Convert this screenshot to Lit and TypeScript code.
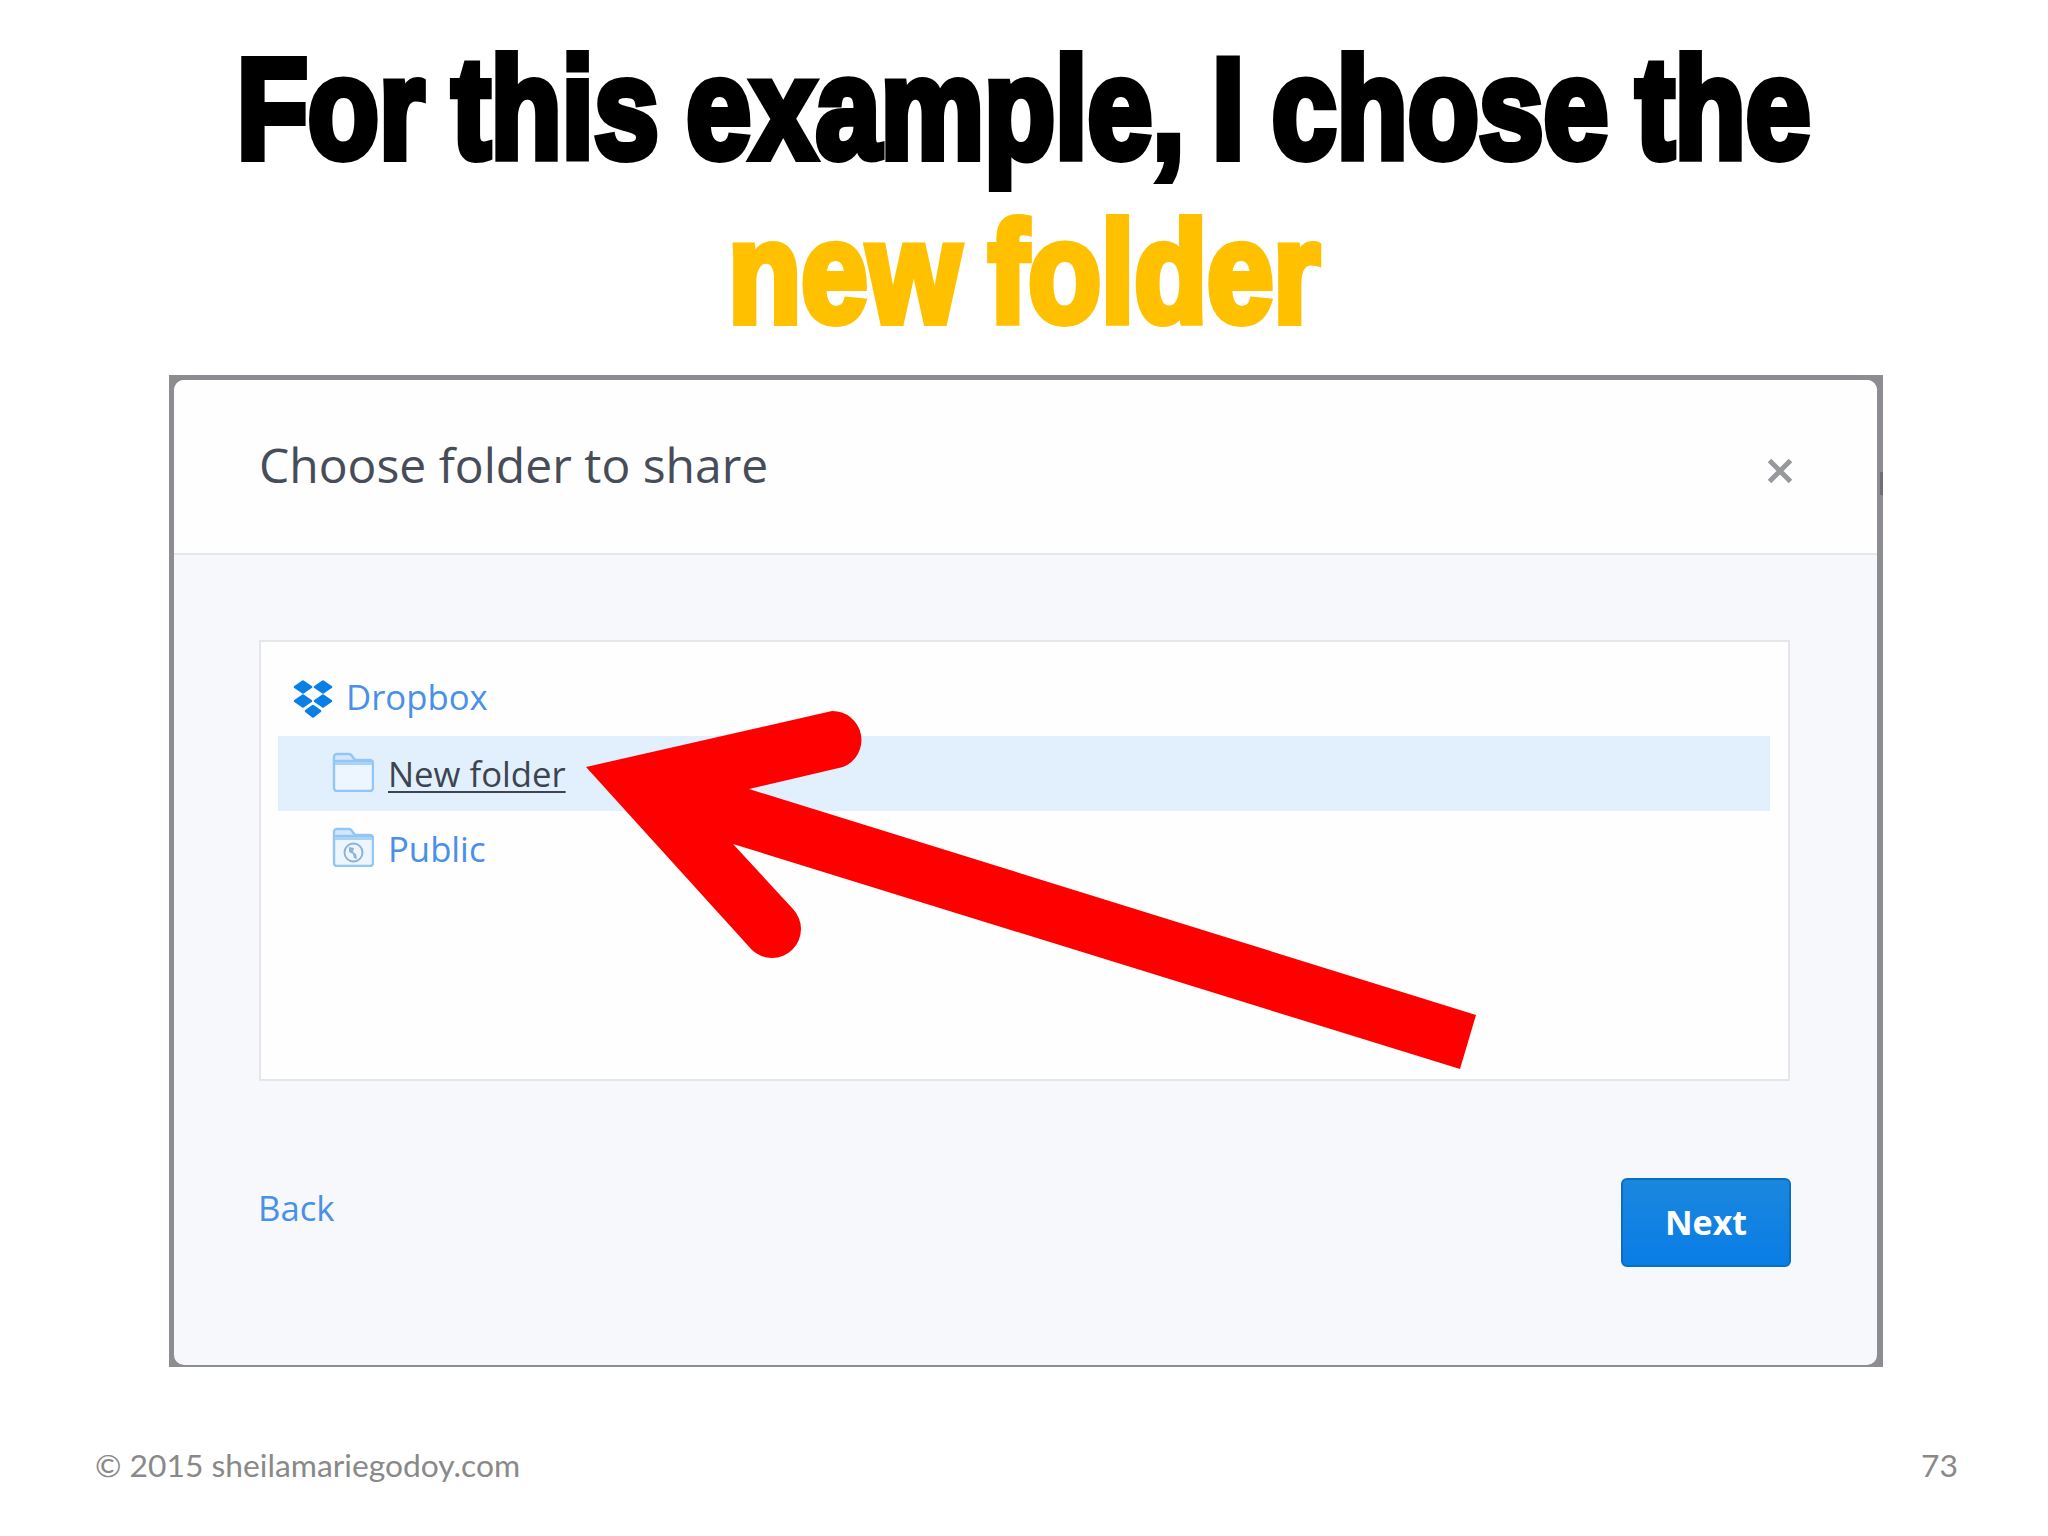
import { LitElement, html, css, svg } from "lit";
import { customElement } from "lit/decorators.js";

const folderBase = svg`
  <path d="M2 12 V5 a3 3 0 0 1 3-3 h12 a3 3 0 0 1 2.4 1.2 L23 8 h15 a3 3 0 0 1 3 3 v1" fill="#d3e7fb" stroke="#93c6f4" stroke-width="2.4"/>
  <rect x="2" y="9" width="39" height="30" rx="3" fill="#edf5fe" stroke="#93c6f4" stroke-width="2.4"/>
  <rect x="3" y="10" width="37" height="3" fill="#a9d2f7"/>
`;

@customElement("app-root")
export class AppRoot extends LitElement {
  static styles = css`
    :host {
      display: block;
      width: 2048px;
      height: 1536px;
      overflow: hidden;
      position: relative;
      background: #fff;
      font-family: "Open Sans", sans-serif;
    }
    .heading {
      height: 375px;
      padding-top: 27px;
      box-sizing: border-box;
      font-family: "Liberation Sans", sans-serif;
      font-weight: 700;
      font-size: 142px;
      line-height: 164px;
      word-spacing: -6px;
      color: #000;
    }
    .line {
      display: flex;
      justify-content: center;
      white-space: nowrap;
    }
    .line span {
      display: block;
      -webkit-text-stroke: 8px currentColor;
    }
    .first span { transform: scaleX(0.82); }
    .second { color: #ffc000; }
    .second span { transform: scaleX(0.84); }
    .frame {
      margin-left: 169px;
      width: 1714px;
      height: 992px;
      box-sizing: border-box;
      padding: 5px 6px 2px 5px;
      background: #8c8d91;
      position: relative;
    }
    .nick {
      position: absolute;
      right: 0;
      top: 97px;
      width: 3px;
      height: 23px;
      background: #6f7074;
    }
    .dialog {
      height: 100%;
      border-radius: 10px;
      overflow: hidden;
      background: #f7f8fb;
      display: flex;
      flex-direction: column;
    }
    .head {
      height: 175px;
      box-sizing: border-box;
      background: #fefefe;
      border-bottom: 2px solid #e5e7ea;
      padding: 0 83px 0 85px;
      display: flex;
      justify-content: space-between;
      align-items: flex-start;
    }
    .title {
      margin-top: 53px;
      font-size: 48px;
      line-height: 64px;
      font-weight: 400;
      color: #474d58;
    }
    .close {
      margin-top: 77px;
      width: 28px;
      height: 28px;
      display: block;
    }
    .body {
      flex: 1;
      padding: 85px 87px 0 85px;
      display: flex;
      flex-direction: column;
    }
    .box {
      height: 441px;
      box-sizing: border-box;
      background: #fefefe;
      border: 2px solid #e4e6ea;
      padding: 20px 18px 0 17px;
    }
    .row {
      height: 75px;
      display: flex;
      align-items: center;
      gap: 14px;
      font-size: 34.7px;
      line-height: 46px;
      color: #4a90e6;
    }
    .row.root { padding-left: 15px; height: 74px; gap: 13px; }
    .row.root .label { margin-bottom: 4px; }
    .row.child { padding-left: 54px; }
    .row.child svg { margin-top: -3px; }
    .row.sel { background: #e2f0fe; color: #3d4450; }
    .row.sel .label {
      text-decoration: underline;
      text-decoration-thickness: 2px;
      text-underline-offset: 4px;
    }
    .foot {
      display: flex;
      justify-content: space-between;
      align-items: flex-start;
      padding-top: 97px;
    }
    .back {
      margin-top: 7px;
      margin-left: -1px;
      font-size: 34.7px;
      line-height: 46px;
      color: #4a90e6;
    }
    .next {
      width: 170px;
      height: 89px;
      box-sizing: border-box;
      margin-right: -1px;
      border: 2px solid #0a6fc2;
      border-radius: 6px;
      background: linear-gradient(#1a87de, #0a7de6);
      color: #fff;
      font-family: "Open Sans", sans-serif;
      font-size: 34px;
      font-weight: 700;
      padding: 0 0 2px;
    }
    .bottom {
      display: flex;
      justify-content: space-between;
      padding: 78px 90px 0 95px;
      font-family: Lato, sans-serif;
      font-size: 31.8px;
      line-height: 40px;
      color: #898989;
    }
    .arrow {
      position: absolute;
      left: 0;
      top: 0;
      pointer-events: none;
    }
  `;

  render() {
    return html`
      <div class="heading">
        <div class="line first"><span>For this example, I chose the</span></div>
        <div class="line second"><span>new folder</span></div>
      </div>
      <div class="frame">
        <div class="nick"></div>
        <div class="dialog">
          <div class="head">
            <div class="title">Choose folder to share</div>
            <svg class="close" viewBox="0 0 28 28">
              <path d="M3.5 3.5 L24.5 24.5 M24.5 3.5 L3.5 24.5" stroke="#98999c" stroke-width="5" fill="none"/>
            </svg>
          </div>
          <div class="body">
            <div class="box">
              <div class="row root">
                <svg width="40" height="38" viewBox="0 0 40 38">
                  <g fill="#0a7fe6" stroke="#0a7fe6" stroke-width="2.5" stroke-linejoin="round">
                    <path d="M10 1.5 L18 7 L10 12.5 L2 7 Z"/>
                    <path d="M30 1.5 L38 7 L30 12.5 L22 7 Z"/>
                    <path d="M10 15.5 L18 21 L10 26.5 L2 21 Z"/>
                    <path d="M30 15.5 L38 21 L30 26.5 L22 21 Z"/>
                    <path d="M20 26 L27 31 L20 36.5 L13 31 Z"/>
                  </g>
                </svg>
                <span class="label">Dropbox</span>
              </div>
              <div class="row child sel">
                <svg width="42" height="40" viewBox="0 0 42 40">${folderBase}</svg>
                <span class="label">New folder</span>
              </div>
              <div class="row child">
                <svg width="42" height="40" viewBox="0 0 42 40">
                  ${folderBase}
                  <circle cx="21.5" cy="25.5" r="9" fill="none" stroke="#8db4d8" stroke-width="2"/>
                  <path d="M17 20 l5 1 -1 4 3 2 1 5 -3 -1 -1 -4 -4 -2 Z" fill="#8db4d8"/>
                </svg>
                <span class="label">Public</span>
              </div>
            </div>
            <div class="foot">
              <span class="back">Back</span>
              <button class="next">Next</button>
            </div>
          </div>
        </div>
      </div>
      <div class="bottom">
        <span>© 2015 sheilamariegodoy.com</span>
        <span>73</span>
      </div>
      <svg class="arrow" width="2048" height="1536" viewBox="0 0 2048 1536">
        <path fill="#ff0000" d="M586 767 L832 711 A29 29 0 0 1 843 767 L749 789 L1476 1015 L1460 1069 L733 844 L793 909 A29 29 0 0 1 752 950 Z"/>
      </svg>
    `;
  }
}
